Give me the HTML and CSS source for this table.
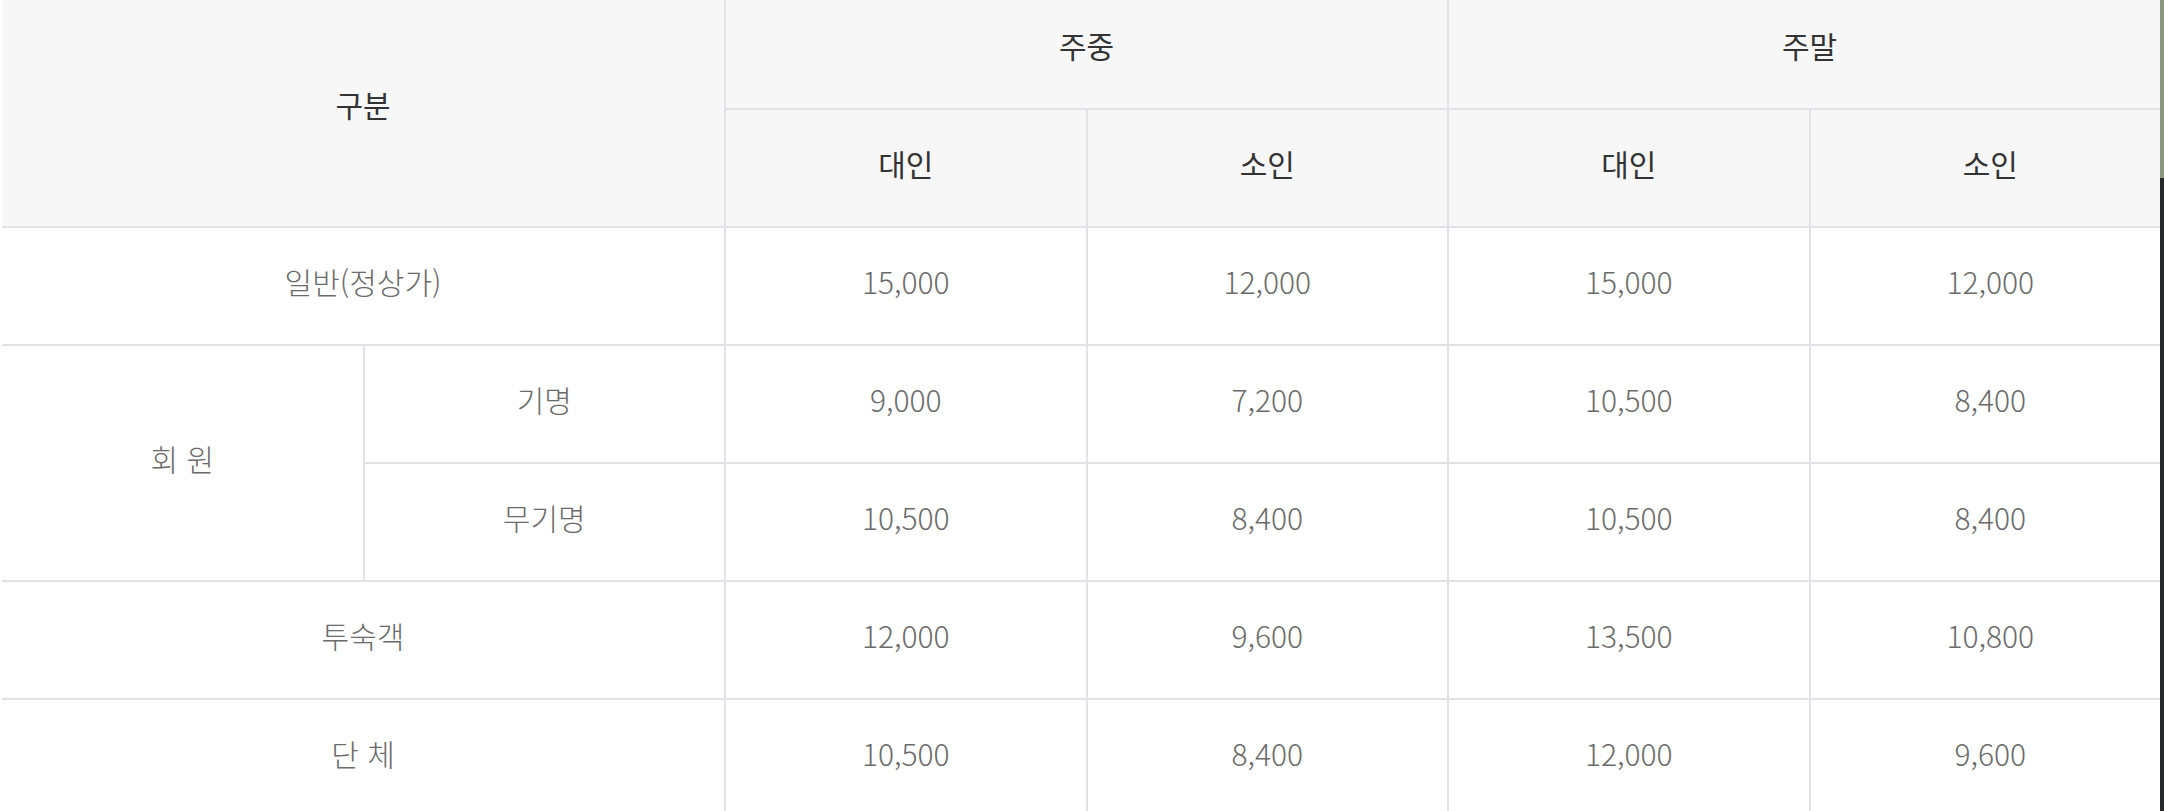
FILE: index.html
```html
<!DOCTYPE html>
<html lang="ko">
<head>
<meta charset="utf-8">
<title>요금표</title>
<link rel="stylesheet" href="styles.css">
</head>
<body>
<div class="page">
  <table class="fare">
    <colgroup>
      <col class="c"><col class="c"><col class="c"><col class="c"><col class="c"><col class="c">
    </colgroup>
    <thead>
      <tr>
        <th colspan="2" rowspan="2">구분</th>
        <th colspan="2">주중</th>
        <th colspan="2">주말</th>
      </tr>
      <tr>
        <th>대인</th>
        <th>소인</th>
        <th>대인</th>
        <th>소인</th>
      </tr>
    </thead>
    <tbody>
      <tr>
        <td colspan="2">일반(정상가)</td>
        <td>15,000</td>
        <td>12,000</td>
        <td>15,000</td>
        <td>12,000</td>
      </tr>
      <tr>
        <td rowspan="2">회 원</td>
        <td>기명</td>
        <td>9,000</td>
        <td>7,200</td>
        <td>10,500</td>
        <td>8,400</td>
      </tr>
      <tr>
        <td>무기명</td>
        <td>10,500</td>
        <td>8,400</td>
        <td>10,500</td>
        <td>8,400</td>
      </tr>
      <tr>
        <td colspan="2">투숙객</td>
        <td>12,000</td>
        <td>9,600</td>
        <td>13,500</td>
        <td>10,800</td>
      </tr>
      <tr>
        <td colspan="2">단 체</td>
        <td>10,500</td>
        <td>8,400</td>
        <td>12,000</td>
        <td>9,600</td>
      </tr>
    </tbody>
  </table>
</div>
<div class="edge"></div>
</body>
</html>
```

FILE: styles.css
```css
html, body {
  margin: 0;
  padding: 0;
  background: #ffffff;
  overflow: hidden;
}

.page {
  padding-left: 2px;
  margin-top: -10px;
}

.fare {
  table-layout: fixed;
  border-collapse: collapse;
  width: 2169px;
  font-family: "Noto Sans CJK KR", "Noto Sans", sans-serif;
  font-size: 30px;
  line-height: 1.3;
}

.fare .c {
  width: 361.5px;
}

.fare tr {
  height: 118px;
}

.fare th,
.fare td {
  border: 2px solid #dfe2e7;
  padding: 0 0 10px;
  text-align: center;
  vertical-align: middle;
}

.fare tr > :first-child {
  border-left: 0;
}

.fare th {
  background: #f7f7f7;
  color: #333333;
  font-weight: 400;
}

.fare td {
  background: #ffffff;
  color: #6b6b6b;
  font-weight: 200;
}

.edge {
  position: fixed;
  top: 0;
  right: 0;
  width: 4px;
  height: 100%;
  background: linear-gradient(#8c977f 0, #8c977f 178px, #24282b 178px, #24282b 100%);
}
```
